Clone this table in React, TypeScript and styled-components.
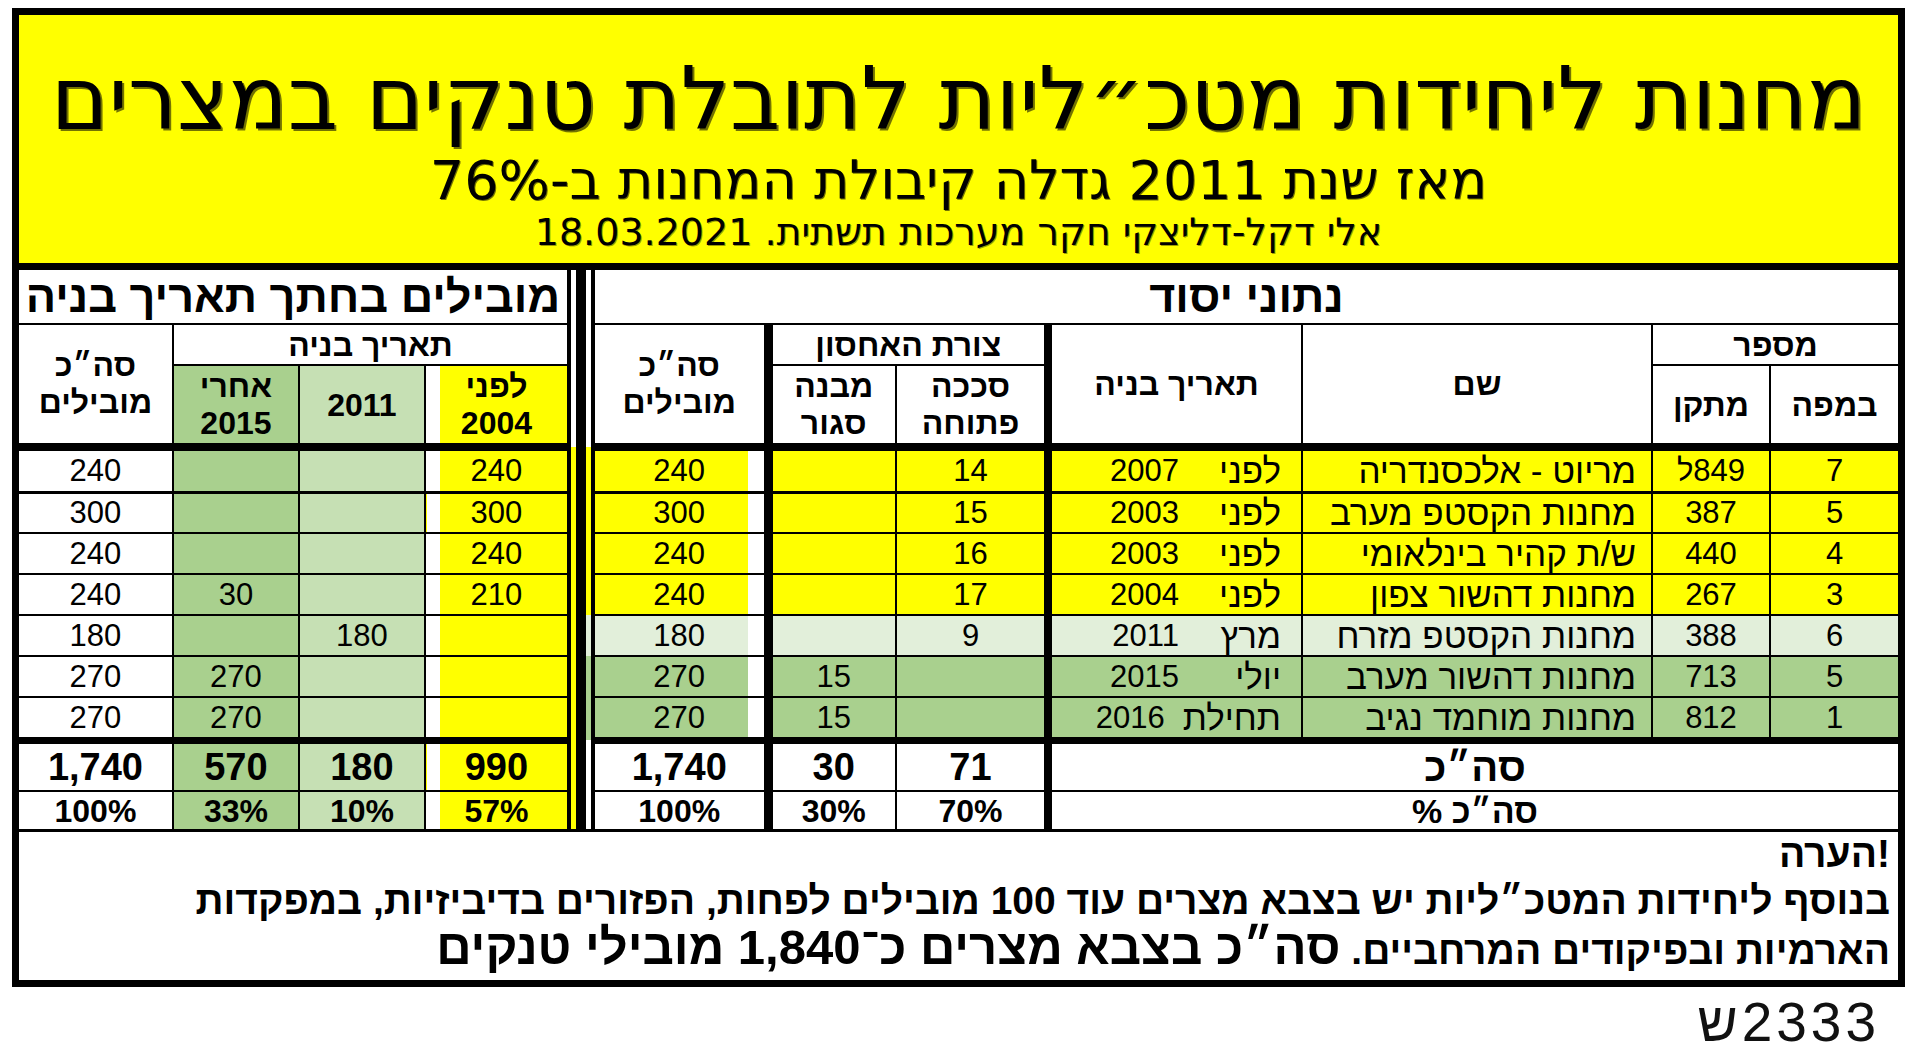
import React from 'react'
import styled, { createGlobalStyle } from 'styled-components'

const Y = '#ffff00'
const G = '#a9d08e'
const LG = '#c6e0b4'
const P = '#e2efda'
const W = '#ffffff'

const GlobalStyle = createGlobalStyle`
  html, body { margin: 0; padding: 0; background: #fff; }
  body { font-family: "Liberation Sans", Arial, sans-serif; color: #000; }
`

const Page = styled.div`
  width: 1920px;
  height: 1064px;
  padding: 8px 0 0 12px;
  box-sizing: border-box;
  overflow: hidden;
`

const Frame = styled.div`
  width: 1893px;
  box-sizing: border-box;
  border: 7px solid #000;
  direction: rtl;
`

const Banner = styled.header`
  height: 255px;
  box-sizing: border-box;
  background: ${Y};
  border-bottom: 7px solid #000;
  padding-top: 30px;
  display: flex;
  flex-direction: column;
  align-items: center;
  font-family: "DejaVu Sans", sans-serif;
  white-space: nowrap;
`

const Title = styled.h1`
  margin: 0;
  font-size: 87px;
  font-weight: 400;
  line-height: 108px;
  text-shadow: 2px 2px 0 rgba(0, 0, 0, 0.55);
`

const Subtitle = styled.h2`
  margin: 0;
  font-size: 54px;
  font-weight: 400;
  line-height: 56px;
  text-shadow: 1px 1px 0 rgba(0, 0, 0, 0.55);
`

const Byline = styled.p`
  margin: 0;
  font-size: 38px;
  line-height: 46px;
  text-shadow: 1px 1px 0 rgba(0, 0, 0, 0.4);
`

const Sheet = styled.table`
  width: 1879px;
  table-layout: fixed;
  border-collapse: collapse;
  border-style: hidden;
  direction: rtl;
`

const Col = styled.col<{ $w: number }>`
  width: ${p => p.$w}px;
`

const Line = styled.tr<{ $h: number }>`
  height: ${p => p.$h}px;
`

type CellProps = {
  $bg?: string
  $bottom?: number
  $left?: number
  $right?: number
  $size?: number
  $bold?: boolean
  $align?: 'center' | 'right'
  $pad?: number
  $lh?: number
}

const Cell = styled.td<CellProps>`
  border: 2px solid #000;
  border-bottom-width: ${p => p.$bottom ?? 2}px;
  border-left-width: ${p => p.$left ?? 2}px;
  border-right-width: ${p => p.$right ?? 2}px;
  background: ${p => p.$bg ?? W};
  font-size: ${p => p.$size ?? 31}px;
  font-weight: ${p => (p.$bold ? 700 : 400)};
  line-height: ${p => p.$lh ?? 1};
  text-align: ${p => p.$align ?? 'center'};
  padding: 0 ${p => p.$pad ?? 0}px 0 0;
  vertical-align: middle;
  white-space: nowrap;
  overflow: hidden;
`

const Sep = styled.td<{ $l: string; $r: string }>`
  border: none;
  padding: 0;
  background: linear-gradient(
    to right,
    #000 0 4px,
    ${p => p.$l} 4px 9px,
    #000 9px 19px,
    ${p => p.$r} 19px 24px,
    #000 24px
  );
`

const DateBox = styled.div`
  display: flex;
  align-items: center;
`

const When = styled.span`
  box-sizing: border-box;
  min-width: 122px;
  padding: 0 20px 0 18px;
  text-align: right;
  font-size: 35px;
`

const Year = styled.span`
  font-size: 31px;
`

const Note = styled.div`
  height: 151px;
  box-sizing: border-box;
  border-top: 3px solid #000;
  padding-right: 8px;
  font-weight: 700;
  font-size: 39px;
  line-height: 47px;
  text-align: right;
  white-space: nowrap;
`

const NoteBody = styled.div`
  margin-top: -2px;
`

const NoteLine = styled.p`
  margin: 0;
`

const Big = styled.span`
  font-size: 49px;
`

const Stamp = styled.div`
  margin-top: 8px;
  padding-right: 40px;
  text-align: right;
  font-family: "Liberation Sans", sans-serif;
  font-size: 55px;
  line-height: 55px;
  letter-spacing: 4px;
  color: #111;
`

const StampText = styled.span`
  direction: ltr;
  unicode-bidi: bidi-override;
`

type Tone = 'y' | 'p' | 'g'
const toneColor: Record<Tone, string> = { y: Y, p: P, g: G }

interface Site {
  map: string
  site: string
  name: string
  when: string
  year: string
  open: string
  closed: string
  total: string
  before: string
  mid: string
  after: string
  tone: Tone
}

const sites: Site[] = [
  { map: '7', site: '849ל', name: 'מריוט - אלכסנדריה', when: 'לפני', year: '2007', open: '14', closed: '', total: '240', before: '240', mid: '', after: '', tone: 'y' },
  { map: '5', site: '387', name: 'מחנות הקסטפ מערב', when: 'לפני', year: '2003', open: '15', closed: '', total: '300', before: '300', mid: '', after: '', tone: 'y' },
  { map: '4', site: '440', name: 'ש/ת קהיר בינלאומי', when: 'לפני', year: '2003', open: '16', closed: '', total: '240', before: '240', mid: '', after: '', tone: 'y' },
  { map: '3', site: '267', name: 'מחנות דהשור צפון', when: 'לפני', year: '2004', open: '17', closed: '', total: '240', before: '210', mid: '', after: '30', tone: 'y' },
  { map: '6', site: '388', name: 'מחנות הקסטפ מזרח', when: 'מרץ', year: '2011', open: '9', closed: '', total: '180', before: '', mid: '180', after: '', tone: 'p' },
  { map: '5', site: '713', name: 'מחנות דהשור מערב', when: 'יולי', year: '2015', open: '', closed: '15', total: '270', before: '', mid: '', after: '270', tone: 'g' },
  { map: '1', site: '812', name: 'מחנות מוחמד נגיב', when: 'תחילת', year: '2016', open: '', closed: '15', total: '270', before: '', mid: '', after: '270', tone: 'g' },
]

const rowHeights = [45, 41, 41, 41, 41, 41, 43]
const rowLines = [3, 2, 2, 2, 2, 2, 7]

// right to left: map, site, name, date, open, closed, total | sep | before, 2011, after, total
const widths = [128, 118, 350, 254, 152, 128, 173, 28, 142, 126, 126, 154]

const beforeBg = `linear-gradient(to right, ${W} 0 14px, ${Y} 14px)`
const totalBg = (c: string) => `linear-gradient(to left, ${W} 0 16px, ${c} 16px)`

function SiteRow({ s, i }: { s: Site; i: number }) {
  const c = toneColor[s.tone]
  const b = rowLines[i]
  return (
    <Line $h={rowHeights[i]}>
      <Cell $bg={c} $bottom={b}>{s.map}</Cell>
      <Cell $bg={c} $bottom={b}>{s.site}</Cell>
      <Cell $bg={c} $bottom={b} $size={35} $align="right" $pad={15}>{s.name}</Cell>
      <Cell $bg={c} $bottom={b} $left={8}>
        <DateBox>
          <When>{s.when}</When>
          <Year>{s.year}</Year>
        </DateBox>
      </Cell>
      <Cell $bg={c} $bottom={b}>{s.open}</Cell>
      <Cell $bg={c} $bottom={b}>{s.closed}</Cell>
      <Cell $bg={totalBg(c)} $bottom={b} $right={9} $left={0}>{s.total}</Cell>
      <Sep $l={Y} $r={c} />
      <Cell $bg={beforeBg} $bottom={b} $right={0}>{s.before}</Cell>
      <Cell $bg={LG} $bottom={b}>{s.mid}</Cell>
      <Cell $bg={G} $bottom={b}>{s.after}</Cell>
      <Cell $bottom={b}>{s.total}</Cell>
    </Line>
  )
}

export default function App() {
  return (
    <Page>
      <GlobalStyle />
      <Frame>
        <Banner>
          <Title>מחנות ליחידות מטכ״ליות לתובלת טנקים במצרים</Title>
          <Subtitle>מאז שנת 2011 גדלה קיבולת המחנות ב-76%</Subtitle>
          <Byline>אלי דקל-דליצקי חקר מערכות תשתית. 18.03.2021</Byline>
        </Banner>

        <Sheet>
          <colgroup>
            {widths.map((w, i) => (
              <Col key={i} $w={w} />
            ))}
          </colgroup>
          <tbody>
            <Line $h={54}>
              <Cell as="th" colSpan={7} $left={0} $size={45} $bold $lh={1.1}>נתוני יסוד</Cell>
              <Sep rowSpan={3} $l={W} $r={W} />
              <Cell as="th" colSpan={4} $right={0} $size={45} $bold $lh={1.1}>מובילים בחתך תאריך בניה</Cell>
            </Line>
            <Line $h={41}>
              <Cell as="th" colSpan={2} $size={32} $bold>מספר</Cell>
              <Cell as="th" rowSpan={2} $bottom={8} $size={32} $bold>שם</Cell>
              <Cell as="th" rowSpan={2} $bottom={8} $left={8} $size={32} $bold>תאריך בניה</Cell>
              <Cell as="th" colSpan={2} $size={32} $bold>צורת האחסון</Cell>
              <Cell as="th" rowSpan={2} $bottom={8} $right={9} $left={0} $size={32} $bold $lh={1.15}>
                סה״כ
                <br />
                מובילים
              </Cell>
              <Cell as="th" colSpan={3} $right={0} $size={32} $bold>תאריך בניה</Cell>
              <Cell as="th" rowSpan={2} $bottom={8} $size={32} $bold $lh={1.15}>
                סה״כ
                <br />
                מובילים
              </Cell>
            </Line>
            <Line $h={82}>
              <Cell as="th" $bottom={8} $size={32} $bold>במפה</Cell>
              <Cell as="th" $bottom={8} $size={32} $bold>מתקן</Cell>
              <Cell as="th" $bottom={8} $size={32} $bold $lh={1.15}>
                סככה
                <br />
                פתוחה
              </Cell>
              <Cell as="th" $bottom={8} $size={32} $bold $lh={1.15}>
                מבנה
                <br />
                סגור
              </Cell>
              <Cell as="th" $bottom={8} $right={0} $bg={beforeBg} $size={32} $bold $lh={1.15}>
                לפני
                <br />
                2004
              </Cell>
              <Cell as="th" $bottom={8} $bg={LG} $size={32} $bold>2011</Cell>
              <Cell as="th" $bottom={8} $bg={G} $size={32} $bold $lh={1.15}>
                אחרי
                <br />
                2015
              </Cell>
            </Line>

            {sites.map((s, i) => (
              <SiteRow key={i} s={s} i={i} />
            ))}

            <Line $h={51}>
              <Cell colSpan={4} $left={8} $size={40} $bold>סה״כ</Cell>
              <Cell $size={38} $bold>71</Cell>
              <Cell $size={38} $bold>30</Cell>
              <Cell $right={9} $left={0} $size={38} $bold>1,740</Cell>
              <Sep $l={Y} $r={W} />
              <Cell $right={0} $bg={beforeBg} $size={38} $bold>990</Cell>
              <Cell $bg={LG} $size={38} $bold>180</Cell>
              <Cell $bg={G} $size={38} $bold>570</Cell>
              <Cell $size={38} $bold>1,740</Cell>
            </Line>
            <Line $h={38}>
              <Cell colSpan={4} $left={8} $size={34} $bold>סה״כ %</Cell>
              <Cell $size={32} $bold>70%</Cell>
              <Cell $size={32} $bold>30%</Cell>
              <Cell $right={9} $left={0} $size={32} $bold>100%</Cell>
              <Sep $l={Y} $r={W} />
              <Cell $right={0} $bg={beforeBg} $size={32} $bold>57%</Cell>
              <Cell $bg={LG} $size={32} $bold>10%</Cell>
              <Cell $bg={G} $size={32} $bold>33%</Cell>
              <Cell $size={32} $bold>100%</Cell>
            </Line>
          </tbody>
        </Sheet>

        <Note>
          <NoteBody>
            <NoteLine>!הערה</NoteLine>
            <NoteLine>
              בנוסף ליחידות המטכ״ליות יש בצבא מצרים עוד 100 מובילים לפחות, הפזורים בדיביזיות, במפקדות
            </NoteLine>
            <NoteLine>
              הארמיות ובפיקודים המרחביים. <Big>סה״כ בצבא מצרים כ־1,840 מובילי טנקים</Big>
            </NoteLine>
          </NoteBody>
        </Note>
      </Frame>
      <Stamp>
        <StampText>ש2333</StampText>
      </Stamp>
    </Page>
  )
}
